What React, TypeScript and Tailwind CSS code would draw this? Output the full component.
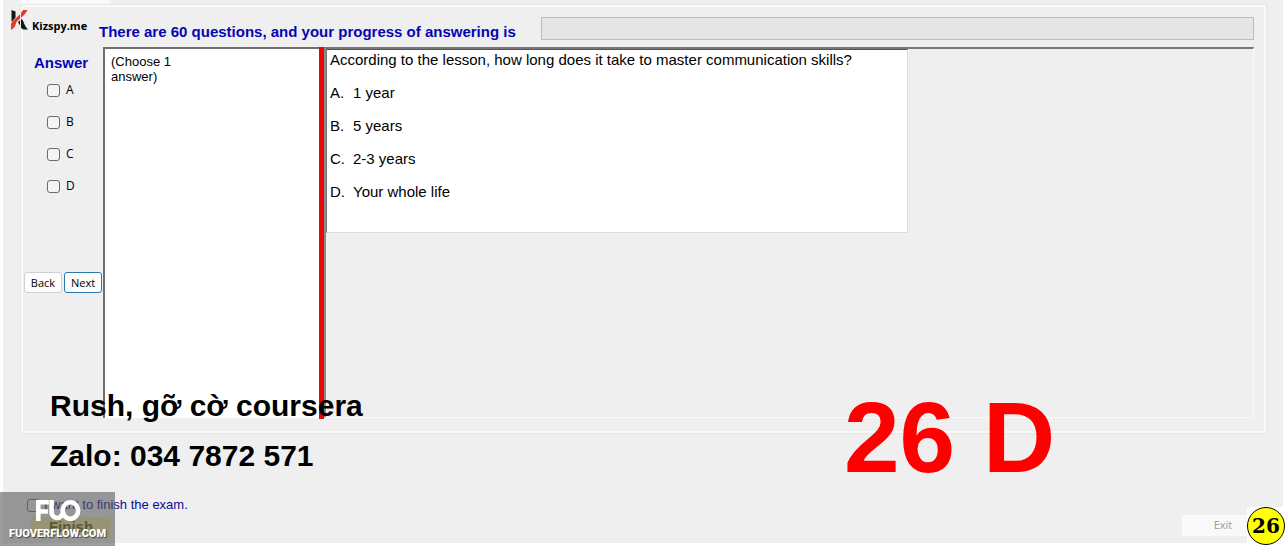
import React from "react";

const answers = ["A", "B", "C", "D"];
const options = [
  { key: "A", text: "1 year" },
  { key: "B", text: "5 years" },
  { key: "C", text: "2-3 years" },
  { key: "D", text: "Your whole life" },
];

const boxClass =
  "size-[13px] shrink-0 appearance-none rounded-[3px] border border-[#6b6b6b] bg-[#f4f4f4] checked:bg-[#0067c0]";

function Logo() {
  return (
    <div className="flex w-[76px] shrink-0 items-start gap-1">
      <svg viewBox="0 0 17 20" className="h-5 w-[17px] shrink-0" aria-hidden="true">
        <path d="M0.5 0 L4.5 1.5 V7.5 L0.5 12 Z" fill="#151515" />
        <path d="M12 0 H16.5 C14 5.500 8 9 5.500 12 C4.500 14 5 17 0 20 V14 C2 9 9 6 12 0 Z" fill="#e8392c" />
        <path d="M7 12 L10.500 9 C13 10.500 13 16 17 19.500 H13 C9.500 19 9 15 7 12 Z" fill="#151515" />
      </svg>
      <span className="pt-2 font-['Open_Sans',sans-serif] text-[11px] leading-4 font-bold text-black">
        Kizspy.me
      </span>
    </div>
  );
}

function Watermark() {
  return (
    <div className="absolute bottom-[-3px] left-[-3px] flex h-[54px] w-[115px] flex-col items-center bg-[#5a5a5a]/60 pt-2">
      <svg viewBox="0 0 50 24" className="h-6 w-[50px]" fill="none" stroke="#fff" strokeWidth="5" aria-hidden="true">
        <path d="M3.5 23 V2.5 H15 M3.5 12.5 H14" />
        <path d="M18 0 V14 A6.5 6.5 0 0 0 27 19 L30 15" />
        <ellipse cx="38.500" cy="11.500" rx="8.500" ry="9" />
        <path d="M30 11 C31 15 33 18 35 20" strokeWidth="4" />
      </svg>
      <span className="font-['Roboto',sans-serif] text-[11px] leading-6 font-black text-white [text-shadow:1px_1px_1px_#444]">
        FUOVERFLOW.COM
      </span>
    </div>
  );
}

export default function App() {
  return (
    <div className="relative min-h-screen border-x-[3px] border-b-[3px] border-white bg-[#efefef] font-['Liberation_Sans',Arial,sans-serif] text-black">
      <div className="ml-[17px] h-[5px] w-[91px] bg-[#f9f9f9]" />

      <main className="mr-[17px] ml-[18px] border-2 border-[#f9f9f9] pb-3 outline outline-[#e6e6e6]">
        <header className="-ml-3 flex items-start">
          <div className="pt-[3px]">
            <Logo />
          </div>
          <h1 className="ml-3 w-[426px] shrink-0 pt-[15px] text-[15px] leading-5 font-bold whitespace-nowrap text-[#0505b4]">
            <label htmlFor="progress">There are 60 questions, and your progress of answering is</label>
          </h1>
          <progress
            id="progress"
            value={0}
            max={60}
            className="mt-[10px] mr-[10px] ml-4 h-[23px] min-w-0 flex-1 appearance-none border border-[#bcbcbc] bg-[#e5e5e5] [&::-webkit-progress-bar]:bg-[#e5e5e5]"
          />
        </header>

        <div className="mt-[5px] mr-[10px] flex h-[372px]">
          <section className="flex w-20 shrink-0 flex-col">
            <h2 className="mt-2 ml-[11px] text-[15px] leading-4 font-bold text-[#0505b4]">Answer</h2>
            <div className="mt-[11px] ml-6 flex flex-col gap-4">
              {answers.map((a) => (
                <label key={a} className="flex h-4 items-center gap-[6px] font-['Open_Sans',sans-serif] text-[12px] leading-4">
                  <input type="checkbox" className={boxClass} />
                  {a}
                </label>
              ))}
            </div>
            <div className="mt-[78px] ml-px flex gap-[2px] font-['Open_Sans',sans-serif] text-[11px]">
              <button className="h-[21px] w-[38px] rounded-[3px] border border-[#d0d0d0] bg-[#fdfdfd] leading-4">Back</button>
              <button className="h-[21px] w-[38px] rounded-[3px] border border-[#2a7ab0] bg-[#fdfdfd] leading-4">Next</button>
            </div>
          </section>

          <section className="h-[371px] w-[216px] shrink-0 border-t-2 border-l-2 border-[#6f6f6f] bg-white pt-[5px] pl-[6px]">
            <p className="w-[80px] text-[13px] leading-[15px]">(Choose 1 answer)</p>
          </section>
          <div className="w-[5px] shrink-0 bg-[#e80808]" />

          <section className="h-[371px] flex-1 border-t-2 border-r border-b border-l-2 border-t-[#777] border-r-[#fafafa] border-b-[#fafafa] border-l-[#8a8a8a]">
            <div className="h-[184px] w-[582px] border border-t-[#555] border-r-[#ddd] border-b-[#ddd] border-l-[#777] bg-white pl-[3px]">
              <p className="text-[15px] leading-5">
                According to the lesson, how long does it take to master communication skills?
              </p>
              <ul className="mt-[13px] flex flex-col gap-[13px] text-[15px] leading-5">
                {options.map((o) => (
                  <li key={o.key} className="flex">
                    <span className="w-[23px]">{o.key}.</span>
                    {o.text}
                  </li>
                ))}
              </ul>
            </div>
          </section>
        </div>
      </main>

      <footer className="mt-[62px] flex items-start justify-between pl-6">
        <div>
          <label className="flex items-center gap-1 text-[13px] leading-5 text-[#0a0a96]">
            <input type="checkbox" className={boxClass} />I want to finish the exam.
          </label>
          <button disabled className="ml-1 h-5 w-20 bg-[#eeee9a] text-[15px] leading-5 font-bold text-[#555500]">
            Finish
          </button>
        </div>
        <button disabled className="mt-5 mr-[19px] h-[21px] w-[82px] bg-[#f9f9f9] font-['Open_Sans',sans-serif] text-[11px] text-[#9a9a9a]">
          Exit
        </button>
      </footer>

      <div className="absolute top-[381px] left-[47px] text-[30px] leading-[50px] font-bold whitespace-nowrap">
        <p>Rush, gỡ cờ coursera</p>
        <p>Zalo: 034 7872 571</p>
      </div>
      <p className="absolute top-[387px] left-[841px] text-[100px] leading-[100px] font-bold whitespace-nowrap text-[#ff0000]">
        26 D
      </p>
      <div className="absolute right-[-2px] bottom-[-2px] bg-white">
        <div className="flex size-[38px] items-center justify-center rounded-full border border-black bg-[#ffff00] font-['DejaVu_Serif',serif] text-[20px] font-bold">
          26
        </div>
      </div>
      <Watermark />
    </div>
  );
}
